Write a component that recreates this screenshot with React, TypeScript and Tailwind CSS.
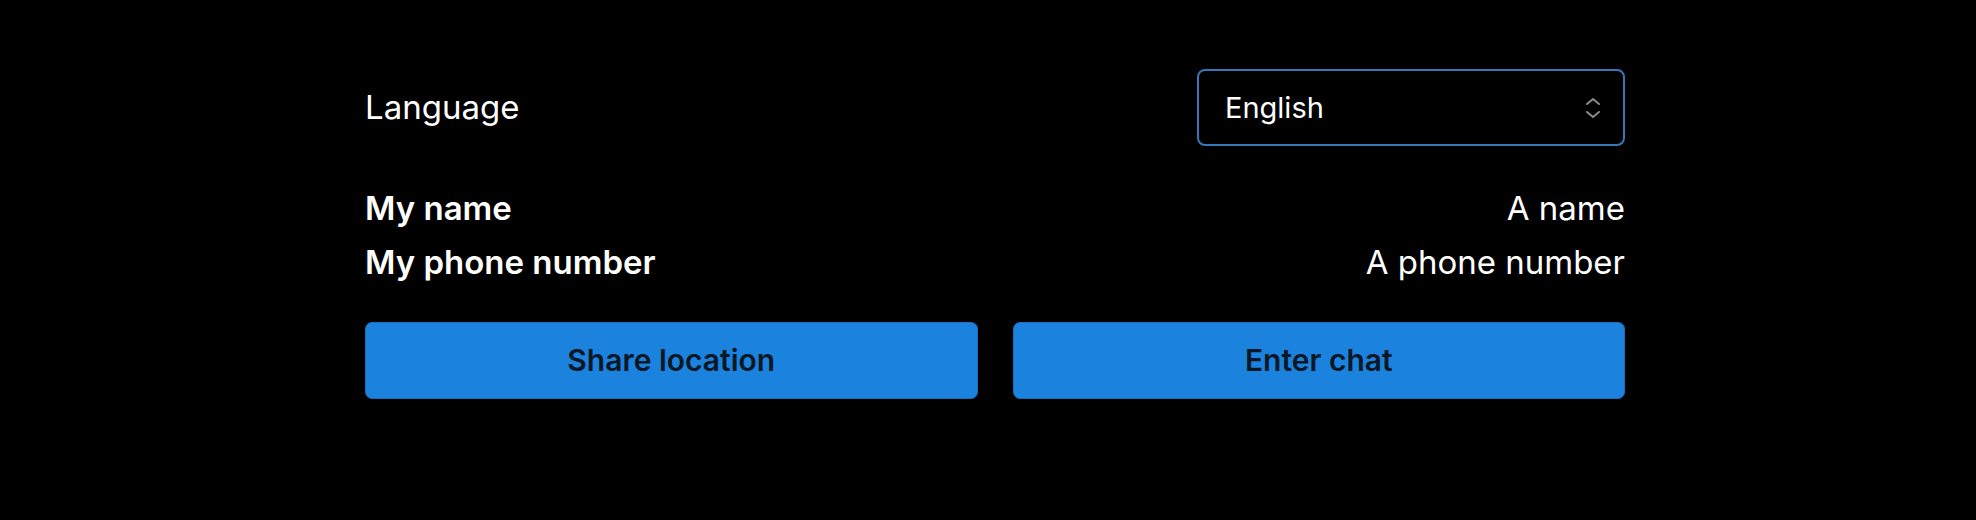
import React from "react";

export default function App() {
  return (
    <div className="w-[1976px] h-[520px] bg-black text-white" style={{ fontFamily: "Inter, 'Noto Sans', sans-serif" }}>
      <div className="ml-[365px] w-[1260px] pt-[69px]">
        <div className="flex items-center justify-between h-[77px]">
          <span className="text-[33px] leading-none font-normal">Language</span>
          <div className="w-[428px] h-[77px] rounded-[8px] border-2 border-[#3577b8] flex items-center justify-between pl-[26px] pr-[22px]">
            <span className="text-[29px] leading-none">English</span>
            <svg width="16" height="22" viewBox="0 0 16 22" fill="none" stroke="#8a8a8a" strokeWidth="2" strokeLinecap="round" strokeLinejoin="round">
              <path d="M2 7 L8 2 L14 7" />
              <path d="M2 15 L8 20 L14 15" />
            </svg>
          </div>
        </div>
        <div className="mt-[36px] flex flex-col">
          <div className="flex items-center justify-between h-[54px]">
            <span className="text-[33px] font-semibold">My name</span>
            <span className="text-[33px]">A name</span>
          </div>
          <div className="flex items-center justify-between h-[54px]">
            <span className="text-[33px] font-semibold">My phone number</span>
            <span className="text-[33px]">A phone number</span>
          </div>
        </div>
        <div className="mt-[32px] grid grid-cols-2 gap-[35px]">
          <button className="h-[77px] rounded-[7px] bg-[#1b82dd] border border-[#1670bf] text-[#0a1826] text-[30px] font-semibold">Share location</button>
          <button className="h-[77px] rounded-[7px] bg-[#1b82dd] border border-[#1670bf] text-[#0a1826] text-[30px] font-semibold">Enter chat</button>
        </div>
      </div>
    </div>
  );
}
